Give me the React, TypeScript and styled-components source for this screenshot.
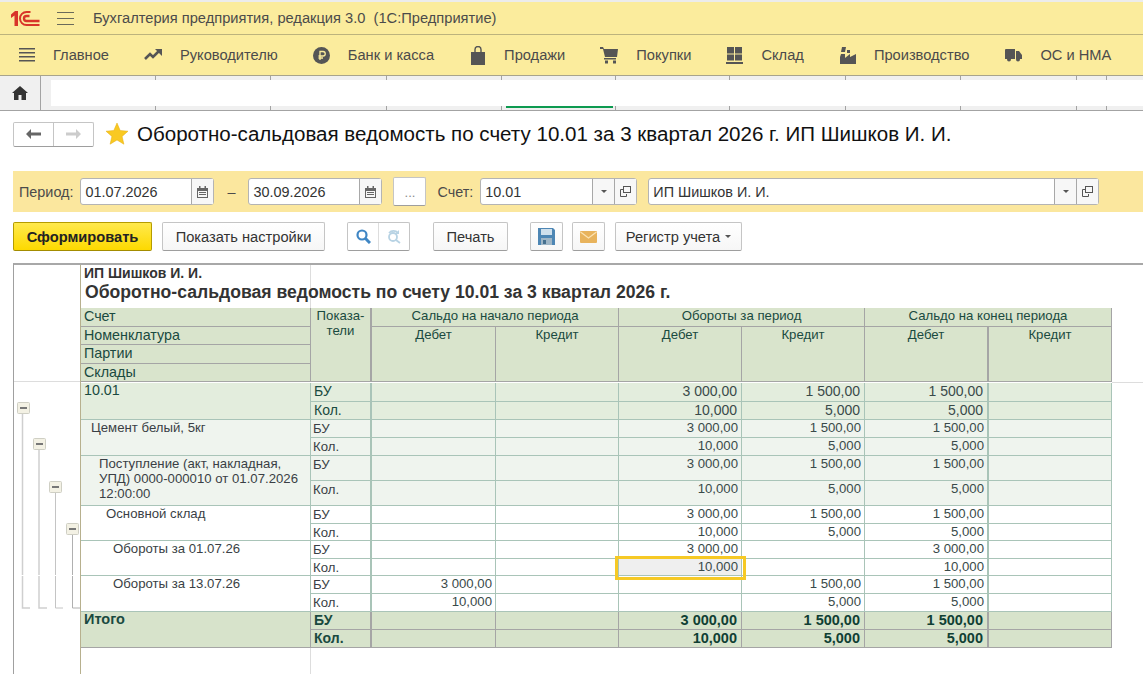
import React from 'react'
import styled, { createGlobalStyle } from 'styled-components'

const Global = createGlobalStyle`
  html, body {
    margin: 0;
    padding: 0;
    height: 674px;
    overflow: hidden;
    background: #fff;
  }
  * { box-sizing: border-box; }
  body { font-family: "Liberation Sans", Arial, sans-serif; color: #333; }
`

const Logo = () => (
  <svg width="30" height="17" viewBox="0 0 30 17">
    <path d="M1 4.5L5 1h3v15H4.500V5.500L1 8z" fill="#d8352a" />
    <path d="M20.500 2H16.500a6.500 6.500 0 0 0 0 13H29.500" fill="none" stroke="#d8352a" strokeWidth="2" />
    <path d="M19.500 6H16.500a2.500 2.500 0 0 0 0 5H29.500" fill="none" stroke="#d8352a" strokeWidth="2.400" />
  </svg>
)

const MenuIcon = ({ name }: { name: string }) => {
  if (name === 'main') return (
    <svg width="16" height="16" viewBox="0 0 16 16" fill="#555">
      <rect y="1" width="16" height="1.500" /><rect y="5" width="16" height="1.500" /><rect y="9" width="16" height="1.500" /><rect y="13" width="16" height="1.500" />
    </svg>
  )
  if (name === 'chart') return (
    <svg width="18" height="12" viewBox="0 0 18 12">
      <path d="M1 10l5-5 3 3 6-6" fill="none" stroke="#555" strokeWidth="2.600" />
      <path d="M11 0h7v7z" fill="#555" />
    </svg>
  )
  if (name === 'bank') return (
    <svg width="17" height="17" viewBox="0 0 17 17">
      <circle cx="8.500" cy="8.500" r="8.500" fill="#555" />
      <path d="M7 13V4.500h3a2 2 0 0 1 0 4.500H5.500M5.500 11H10" fill="none" stroke="#fbec9d" strokeWidth="1.300" />
    </svg>
  )
  if (name === 'bag') return (
    <svg width="14" height="19" viewBox="0 0 14 19" fill="#555">
      <path d="M0 6h14v13H0z" />
      <path d="M4 8V3.500a3 3 0 0 1 6 0V8" fill="none" stroke="#555" strokeWidth="1.400" />
    </svg>
  )
  if (name === 'cart') return (
    <svg width="18" height="17" viewBox="0 0 18 17" fill="#555">
      <path d="M0 0h3l1 2h14l-1 8H5L3 2H0z" />
      <rect x="4" y="11" width="12" height="1.500" />
      <rect x="5" y="13.500" width="3" height="3" /><rect x="13" y="13.500" width="3" height="3" />
    </svg>
  )
  if (name === 'stock') return (
    <svg width="17" height="17" viewBox="0 0 17 17" fill="#555">
      <rect x="1" width="7" height="6.500" /><rect x="9" width="7" height="6.500" />
      <rect x="1" y="7.500" width="7" height="6" /><rect x="9" y="7.500" width="7" height="6" />
      <rect y="15" width="17" height="2" />
    </svg>
  )
  if (name === 'factory') return (
    <svg width="16" height="17" viewBox="0 0 16 17" fill="#555">
      <path d="M2 0h4L5 5H1z" />
      <path d="M7 3h3v3H7z" />
      <path d="M0 17v-7l1-3h4v4l5-4v3l6-3v10z" />
    </svg>
  )
  return (
    <svg width="17" height="14" viewBox="0 0 17 14" fill="#555">
      <path d="M0 2a1 1 0 0 1 1-1h9v10H0z" />
      <path d="M11 3h3l3 4v4h-6z" />
      <circle cx="4" cy="11.500" r="2" /><circle cx="13" cy="11.500" r="2" />
    </svg>
  )
}

const TopStrip = styled.div`
  height: 2px;
  background: #ececec;
`
const TitleBar = styled.div`
  height: 33px;
  display: flex;
  align-items: center;
  padding-left: 10px;
  background: #fbec9d;
  border-bottom: 1px solid #bcb37d;
  font-size: 14.67px;
  color: #4b4b4b;
`
const Burger = styled.div`
  width: 17px;
  height: 13px;
  margin-left: 17px;
  margin-right: 19px;
  border-top: 1px solid #6a6a5a;
  border-bottom: 1px solid #6a6a5a;
  background: linear-gradient(#6a6a5a, #6a6a5a) center / 100% 1px no-repeat;
`
const MenuBar = styled.div`
  height: 41px;
  display: flex;
  align-items: center;
  background: #fbec9d;
  border-bottom: 1px solid #a8a48c;
  font-size: 14.67px;
  color: #4b4b4b;
`
const MenuItem = styled.div<{ $left: number; $gap: number }>`
  display: flex;
  align-items: center;
  margin-left: ${(p) => p.$left}px;
  gap: ${(p) => p.$gap}px;
`
const TabBar = styled.div`
  height: 35px;
  display: flex;
  background: #f0f0f0;
  border-bottom: 1px solid #a3a3a3;
`
const HomeCell = styled.div`
  width: 41px;
  display: flex;
  align-items: center;
  justify-content: center;
  border-right: 1px solid #a3a3a3;
`
const TabStrip = styled.div`
  flex: 1;
  margin: 4px 0 0 10px;
  height: 26px;
  display: flex;
  background: #fff;
`
const TabSlot = styled.div<{ $w: number }>`
  position: relative;
  width: ${(p) => p.$w}px;
  flex-shrink: 0;
  &::before {
    content: '';
    position: absolute;
    top: -4px;
    height: 4px;
    right: 0;
    width: 1px;
    background: #a3a3a3;
  }
  &::after {
    content: '';
    position: absolute;
    top: 100%;
    height: 4px;
    right: 0;
    width: 1px;
    background: #a3a3a3;
  }
`
const ActiveMark = styled.div`
  position: absolute;
  top: 100%;
  left: 4px;
  right: 3px;
  height: 2px;
  background: #0d9a50;
`
const Heading = styled.div`
  display: flex;
  align-items: center;
  height: 38px;
  margin: 4px 0 0 13px;
`
const NavGroup = styled.div`
  width: 81px;
  height: 25px;
  display: flex;
  background: #fff;
  border: 1px solid #c5c5c5;
  border-bottom-color: #9e9e9e;
  border-radius: 2px;
`
const NavButton = styled.div<{ $split?: boolean }>`
  flex: 1;
  display: flex;
  align-items: center;
  justify-content: center;
  border-left: ${(p) => (p.$split ? '1px solid #c5c5c5' : 'none')};
`
const PageTitle = styled.h1`
  margin: 0 0 0 9px;
  font-size: 20.55px;
  font-weight: 400;
  color: #111;
  white-space: nowrap;
`
const FilterBand = styled.div`
  height: 41px;
  margin: 18px 0 0 13px;
  display: flex;
  align-items: center;
  padding-left: 6px;
  background: #fbe79e;
  font-size: 14.4px;
  color: #4b4b4b;
`
const FieldLabel = styled.span<{ $left?: number }>`
  margin-left: ${(p) => p.$left ?? 0}px;
`
const Field = styled.div<{ $w: number; $left: number }>`
  width: ${(p) => p.$w}px;
  height: 27px;
  margin-left: ${(p) => p.$left}px;
  display: flex;
  background: #fff;
  border: 1px solid #b4b4b4;
  border-radius: 3px;
  color: #333;
`
const FieldValue = styled.div`
  flex: 1;
  display: flex;
  align-items: center;
  padding-left: 4px;
`
const FieldAddon = styled.div`
  width: 22px;
  display: flex;
  align-items: center;
  justify-content: center;
  border-left: 1px solid #a8a8a8;
  background: #f7f7f7;
`
const Caret = styled.span`
  width: 0;
  height: 0;
  border-left: 3px solid transparent;
  border-right: 3px solid transparent;
  border-top: 3px solid #555;
`
const Dash = styled.span`
  width: 34px;
  text-align: center;
`
const DotsButton = styled.div`
  width: 33px;
  height: 29px;
  margin-left: 11px;
  text-align: center;
  line-height: 30px;
  font-size: 13px;
  color: #8a8a8a;
  background: #fff;
  border: 1px solid #c5c5c5;
  border-bottom-color: #9e9e9e;
  border-radius: 2px;
`
const Toolbar = styled.div`
  height: 29px;
  margin: 10px 0 0 13px;
  display: flex;
  align-items: center;
  font-size: 14.67px;
  color: #333;
`
const Button = styled.div<{ $w: number; $left: number; $primary?: boolean }>`
  width: ${(p) => p.$w}px;
  height: 29px;
  margin-left: ${(p) => p.$left}px;
  display: flex;
  align-items: center;
  justify-content: center;
  gap: 5px;
  border: 1px solid ${(p) => (p.$primary ? '#b59c00' : '#c5c5c5')};
  border-bottom-color: ${(p) => (p.$primary ? '#a38c00' : '#9e9e9e')};
  border-radius: 2px;
  background: ${(p) => (p.$primary ? 'linear-gradient(#ffe94d, #fdd900)' : 'linear-gradient(#fff, #f6f6f6)')};
  font-weight: ${(p) => (p.$primary ? 700 : 400)};
  color: ${(p) => (p.$primary ? '#222' : '#333')};
  white-space: nowrap;
`
const SearchGroup = styled.div`
  width: 63px;
  height: 29px;
  margin-left: 22px;
  display: flex;
  border: 1px solid #c5c5c5;
  border-bottom-color: #9e9e9e;
  border-radius: 2px;
`
const SearchCell = styled.div<{ $split?: boolean }>`
  flex: 1;
  display: flex;
  align-items: center;
  justify-content: center;
  border-left: ${(p) => (p.$split ? '1px solid #ddd' : 'none')};
`
const Frame = styled.div`
  margin: 12px 0 0 13px;
  height: 411px;
  display: flex;
  border-top: 2px solid #a8a8a8;
  border-left: 1px solid #a0a0a0;
`
const Outline = styled.div`
  width: 66px;
  flex-shrink: 0;
`
const ReportArea = styled.div`
  flex: 1;
  border-left: 1px solid #b7b08e;
`
const ReportHead = styled.div`
  width: 230px;
  height: 43px;
  padding: 0 0 0 3px;
  border-right: 1px solid #ddd;
  color: #333;
  font-weight: 700;
  white-space: nowrap;
`
const Company = styled.div`
  font-size: 14px;
  line-height: 16px;
`
const ReportTitle = styled.div`
  font-size: 17.6px;
  line-height: 22px;
  margin-left: 1px;
`
const Sheet = styled.div`
  display: grid;
  grid-template-columns: 230px 61px 124px 123px 123px 123px 124px 123px;
  grid-template-rows: 19px 18px 19px 18px 1px 19px 18px 18px 18px 25px 25px 18px 17px 18px 17px 18px 18px 18px 18px;
  width: 1030px;
`
type Tone = 'head' | 'first' | 'soft' | 'plain' | 'total'
const toneBg: Record<Tone, string> = {
  head: '#d9e4cc',
  first: '#e3eddd',
  soft: '#eff4ee',
  plain: '#fff',
  total: '#d7e3cb',
}
const Cell = styled.div<{ $tone: Tone; $right?: boolean; $thick?: boolean }>`
  background: ${(p) => toneBg[p.$tone]};
  border-right: ${(p) => (p.$thick ? 2 : 1)}px solid ${(p) => (p.$tone === 'head' || p.$tone === 'total' ? '#a5a5a5' : '#a9c4b8')};
  border-bottom: 1px solid ${(p) => (p.$tone === 'head' || p.$tone === 'total' ? '#a5a5a5' : '#a9c4b8')};
  font-size: ${(p) => (p.$tone === 'first' ? 14.3 : p.$tone === 'total' ? 14.5 : 13.2)}px;
  font-weight: ${(p) => (p.$tone === 'total' ? 700 : 400)};
  line-height: 17px;
  color: ${(p) => (p.$tone === 'plain' || p.$tone === 'soft' ? '#3a3f45' : '#1a4a40')};
  padding: 0 3px;
  text-align: ${(p) => (p.$right ? 'right' : 'left')};
  white-space: nowrap;
`
const HeadCell = styled(Cell)<{ $col?: number; $rows?: number }>`
  grid-column: span ${(p) => p.$col ?? 1};
  grid-row: span ${(p) => p.$rows ?? 1};
  text-align: center;
  font-size: 13.2px;
  line-height: 15px;
  color: #1a4a40;
  white-space: normal;
`
const RowGap = styled.div`
  position: relative;
  grid-column: 1 / -1;
  background: #fff;
  &::after {
    content: '';
    position: absolute;
    left: 100%;
    top: 0;
    width: 32px;
    height: 1px;
    background: #ddd;
  }
`
const LabelCell = styled(Cell)<{ $indent: number }>`
  grid-row: span 2;
  padding-left: ${(p) => p.$indent}px;
  line-height: 15px;
  white-space: normal;
`
const NameCell = styled(Cell)`
  padding-left: 3px;
  font-size: 14.3px;
`
const ValueCell = styled(Cell)<{ $selected?: boolean }>`
  position: relative;
  font-size: ${(p) => (p.$tone === 'first' ? 14 : p.$tone === 'total' ? 14.5 : 13.2)}px;
  padding-right: ${(p) => (p.$tone === 'first' || p.$tone === 'total' ? 4 : 3)}px;
  line-height: 16px;
  background: ${(p) => (p.$selected ? '#efefef' : toneBg[p.$tone])};
  color: ${(p) => (p.$tone === 'total' ? '#103f34' : '#3a4a4a')};
`
const Selection = styled.div`
  position: absolute;
  inset: -3px -5px -5px -4px;
  border: 3px solid #f6c925;
  z-index: 2;
`
const KindCell = styled(Cell)`
  font-size: ${(p) => (p.$tone === 'first' || p.$tone === 'total' ? 14 : 13.2)}px;
  padding-left: ${(p) => (p.$tone === 'first' || p.$tone === 'total' ? 3 : 2)}px;
`
const Tail = styled.div`
  width: 230px;
  height: 27px;
  border-right: 1px solid #ddd;
`

type DataRow = [string, string, string, string, string, string, string]

const groups: { label: string; indent: number; tone: Tone; rows: DataRow[] }[] = [
  {
    label: '10.01', indent: 3, tone: 'first',
    rows: [
      ['БУ', '', '', '3 000,00', '1 500,00', '1 500,00', ''],
      ['Кол.', '', '', '10,000', '5,000', '5,000', ''],
    ],
  },
  {
    label: 'Цемент белый, 5кг', indent: 10, tone: 'soft',
    rows: [
      ['БУ', '', '', '3 000,00', '1 500,00', '1 500,00', ''],
      ['Кол.', '', '', '10,000', '5,000', '5,000', ''],
    ],
  },
  {
    label: 'Поступление (акт, накладная, УПД) 0000-000010 от 01.07.2026 12:00:00', indent: 18, tone: 'soft',
    rows: [
      ['БУ', '', '', '3 000,00', '1 500,00', '1 500,00', ''],
      ['Кол.', '', '', '10,000', '5,000', '5,000', ''],
    ],
  },
  {
    label: 'Основной склад', indent: 25, tone: 'plain',
    rows: [
      ['БУ', '', '', '3 000,00', '1 500,00', '1 500,00', ''],
      ['Кол.', '', '', '10,000', '5,000', '5,000', ''],
    ],
  },
  {
    label: 'Обороты за 01.07.26', indent: 32, tone: 'plain',
    rows: [
      ['БУ', '', '', '3 000,00', '', '3 000,00', ''],
      ['Кол.', '', '', '10,000', '', '10,000', ''],
    ],
  },
  {
    label: 'Обороты за 13.07.26', indent: 32, tone: 'plain',
    rows: [
      ['БУ', '3 000,00', '', '', '1 500,00', '1 500,00', ''],
      ['Кол.', '10,000', '', '', '5,000', '5,000', ''],
    ],
  },
  {
    label: 'Итого', indent: 3, tone: 'total',
    rows: [
      ['БУ', '', '', '3 000,00', '1 500,00', '1 500,00', ''],
      ['Кол.', '', '', '10,000', '5,000', '5,000', ''],
    ],
  },
]

const menu = [
  { icon: 'main', text: 'Главное', left: 19, gap: 18 },
  { icon: 'chart', text: 'Руководителю', left: 35, gap: 18 },
  { icon: 'bank', text: 'Банк и касса', left: 35, gap: 18 },
  { icon: 'bag', text: 'Продажи', left: 37, gap: 19 },
  { icon: 'cart', text: 'Покупки', left: 35, gap: 18 },
  { icon: 'stock', text: 'Склад', left: 35, gap: 18 },
  { icon: 'factory', text: 'Производство', left: 36, gap: 18 },
  { icon: 'truck', text: 'ОС и НМА', left: 36, gap: 18 },
]

const tabs = [105, 115, 116, 115, 114, 114, 116, 115, 116, 30]

const Calendar = () => (
  <svg width="11" height="12" viewBox="0 0 11 12" fill="#666">
    <path d="M0 2h11v10H0zM1 5v6h9V5z" />
    <rect x="2" y="0" width="1.500" height="3" /><rect x="7.500" y="0" width="1.500" height="3" />
    <rect x="2" y="6" width="7" height="1" /><rect x="2" y="8" width="7" height="1" />
  </svg>
)
const OpenIcon = () => (
  <svg width="11" height="11" viewBox="0 0 11 11" fill="none" stroke="#555">
    <rect x="3.500" y="0.500" width="7" height="6" />
    <path d="M3 3.500H0.500v7h6V8" />
  </svg>
)

const OutlineDrawing = () => (
  <svg width="66" height="409" viewBox="0 0 66 409" display="block">
    <path d="M0 116.500H66" stroke="#ddd" />
    <g fill="none">
      <path d="M8.500 148V343H16" stroke="#cfcfcf" strokeWidth="1.500" />
      <path d="M25 185V343H33" stroke="#cfcfcf" strokeWidth="1.500" />
      <path d="M41.500 228V343H49" stroke="#c4c4c4" />
      <path d="M58.500 270V343H66" stroke="#b0b0b0" />
    </g>
    <path d="M0 310.500H66" stroke="#fff" />
    {[[3, 137], [19, 173], [35, 216], [52, 258]].map(([x, y]) => (
      <g key={x}>
        <rect x={x + 0.5} y={y + 0.5} width="12" height="11" rx="1" fill="#f3f1e4" stroke="#cfcfc4" />
        <rect x={x + 3} y={y + 5} width="7" height="2" fill="#777" />
      </g>
    ))}
  </svg>
)

const App = () => (
  <>
    <Global />
    <TopStrip />
    <TitleBar>
      <Logo />
      <Burger />
      Бухгалтерия предприятия, редакция 3.0&nbsp;&nbsp;(1С:Предприятие)
    </TitleBar>
    <MenuBar>
      {menu.map((m) => (
        <MenuItem key={m.text} $left={m.left} $gap={m.gap}>
          <MenuIcon name={m.icon} />
          {m.text}
        </MenuItem>
      ))}
    </MenuBar>
    <TabBar>
      <HomeCell>
        <svg width="16" height="14" viewBox="0 0 16 14" fill="#333">
          <path d="M8 0l8 7h-2v7H9.500V9h-3v5H2V7H0z" />
        </svg>
      </HomeCell>
      <TabStrip>
        {tabs.map((w, i) => (
          <TabSlot key={i} $w={w}>
            {i === 4 && <ActiveMark />}
          </TabSlot>
        ))}
      </TabStrip>
    </TabBar>
    <Heading>
      <NavGroup>
        <NavButton>
          <svg width="15" height="10" viewBox="0 0 15 10" fill="#666"><path d="M0 5l5-5v3.500h10v3H5V10z" /></svg>
        </NavButton>
        <NavButton $split>
          <svg width="15" height="10" viewBox="0 0 15 10" fill="#ccc"><path d="M15 5l-5-5v3.500H0v3h10V10z" /></svg>
        </NavButton>
      </NavGroup>
      <svg width="22" height="22" viewBox="0 0 22 22" style={{ marginLeft: 12 }}>
        <path d="M11 0l3.200 7.500 7.800.7-5.900 5.200 1.800 7.800L11 17l-6.900 4.200 1.800-7.800L0 8.200l7.800-.7z" fill="#f9c922" stroke="#e5ad10" strokeWidth="0.500" />
      </svg>
      <PageTitle>Оборотно-сальдовая ведомость по счету 10.01 за 3 квартал 2026 г. ИП Шишков И. И.</PageTitle>
    </Heading>
    <FilterBand>
      <FieldLabel>Период:</FieldLabel>
      <Field $w={134} $left={7}>
        <FieldValue>01.07.2026</FieldValue>
        <FieldAddon><Calendar /></FieldAddon>
      </Field>
      <Dash>–</Dash>
      <Field $w={134} $left={0}>
        <FieldValue>30.09.2026</FieldValue>
        <FieldAddon><Calendar /></FieldAddon>
      </Field>
      <DotsButton>...</DotsButton>
      <FieldLabel $left={11}>Счет:</FieldLabel>
      <Field $w={157} $left={7}>
        <FieldValue>10.01</FieldValue>
        <FieldAddon><Caret /></FieldAddon>
        <FieldAddon><OpenIcon /></FieldAddon>
      </Field>
      <Field $w={451} $left={11}>
        <FieldValue>ИП Шишков И. И.</FieldValue>
        <FieldAddon><Caret /></FieldAddon>
        <FieldAddon><OpenIcon /></FieldAddon>
      </Field>
    </FilterBand>
    <Toolbar>
      <Button $w={139} $left={0} $primary>Сформировать</Button>
      <Button $w={163} $left={10}>Показать настройки</Button>
      <SearchGroup>
        <SearchCell>
          <svg width="15" height="15" viewBox="0 0 15 15" fill="none" stroke="#3f86c4" strokeWidth="2.200">
            <circle cx="6" cy="6" r="4.500" /><path d="M9.500 9.500L14 14" strokeWidth="3" />
          </svg>
        </SearchCell>
        <SearchCell $split>
          <svg width="16" height="15" viewBox="0 0 16 15" fill="none" stroke="#b8d3e4" strokeWidth="1.800">
            <circle cx="7" cy="8" r="4" /><path d="M10 11l4 3M3 4a6 6 0 0 1 9 0" /><path d="M13 1v4H9z" fill="#b8d3e4" stroke="none" />
          </svg>
        </SearchCell>
      </SearchGroup>
      <Button $w={75} $left={23}>Печать</Button>
      <Button $w={33} $left={22}>
        <svg width="17" height="17" viewBox="0 0 17 17">
          <path d="M0 0h15l2 2v15H0z" fill="#4d86b4" />
          <rect x="3" y="1" width="11" height="6" fill="#cfe0ec" />
          <rect x="3" y="10" width="11" height="7" fill="#9fb6c6" />
          <rect x="5" y="12" width="3" height="4" fill="#45708f" />
        </svg>
      </Button>
      <Button $w={33} $left={9}>
        <svg width="17" height="12" viewBox="0 0 17 12">
          <rect width="17" height="12" rx="1" fill="#e8b35c" />
          <path d="M0.500 1l8 6 8-6" fill="none" stroke="#fbe3b3" strokeWidth="1.200" />
        </svg>
      </Button>
      <Button $w={127} $left={10}>Регистр учета <Caret /></Button>
    </Toolbar>
    <Frame>
      <Outline><OutlineDrawing /></Outline>
      <ReportArea>
        <ReportHead>
          <Company>ИП Шишков И. И.</Company>
          <ReportTitle>Оборотно-сальдовая ведомость по счету 10.01 за 3 квартал 2026 г.</ReportTitle>
        </ReportHead>
        <Sheet>
          <NameCell $tone="head">Счет</NameCell>
          <HeadCell $tone="head" $rows={4} $thick>Показа-<br />тели</HeadCell>
          <HeadCell $tone="head" $col={2}>Сальдо на начало периода</HeadCell>
          <HeadCell $tone="head" $col={2}>Обороты за период</HeadCell>
          <HeadCell $tone="head" $col={2}>Сальдо на конец периода</HeadCell>
          <NameCell $tone="head">Номенклатура</NameCell>
          {['Дебет', 'Кредит', 'Дебет', 'Кредит', 'Дебет', 'Кредит'].map((t, i) => (
            <HeadCell key={i} $tone="head" $rows={3} $thick={i === 4}>{t}</HeadCell>
          ))}
          <NameCell $tone="head">Партии</NameCell>
          <NameCell $tone="head">Склады</NameCell>
          <RowGap />
          {groups.map((g, gi) => (
            <React.Fragment key={g.label}>
              <LabelCell $tone={g.tone} $indent={g.indent}>{g.label}</LabelCell>
              {g.rows.map((row, ri) => row.map((v, ci) => {
                if (ci === 0) return <KindCell key={`${ri}-${ci}`} $tone={g.tone} $thick>{v}</KindCell>
                const selected = gi === 4 && ri === 1 && ci === 3
                return (
                  <ValueCell key={`${ri}-${ci}`} $tone={g.tone} $right $thick={ci === 5} $selected={selected}>
                    {v}
                    {selected && <Selection />}
                  </ValueCell>
                )
              }))}
            </React.Fragment>
          ))}
        </Sheet>
        <Tail />
      </ReportArea>
    </Frame>
  </>
)

export default App
